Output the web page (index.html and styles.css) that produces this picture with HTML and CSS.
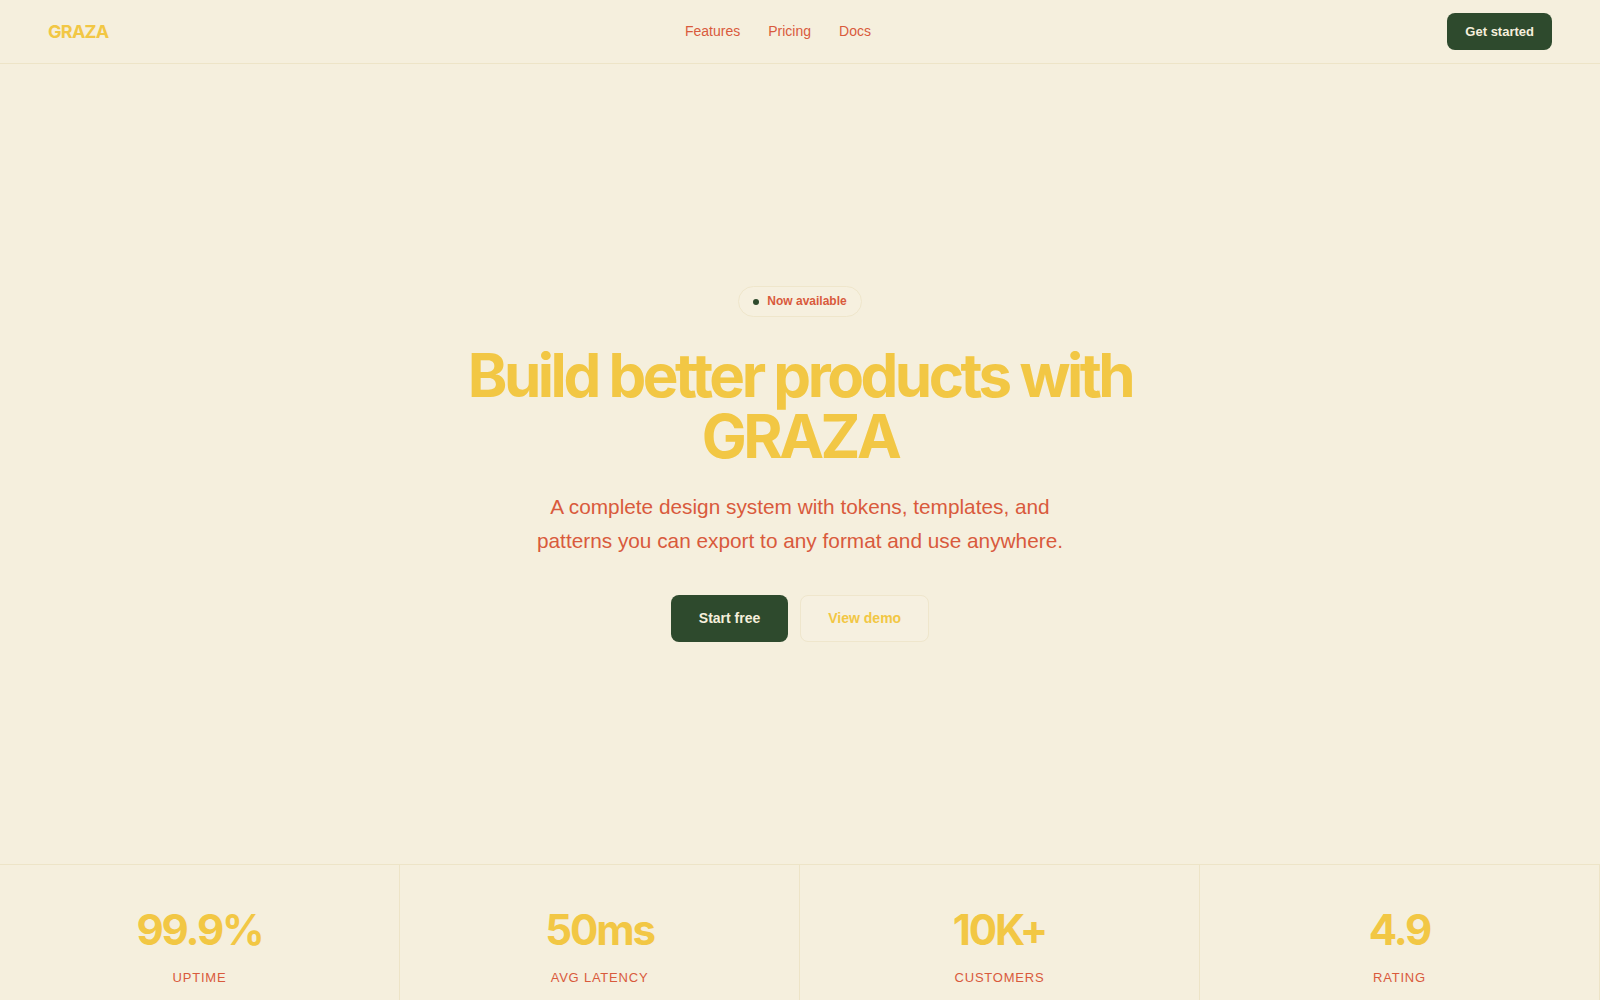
FILE: index.html
```html
<!DOCTYPE html>
<html lang="en">
<head>
<meta charset="utf-8">
<title>GRAZA</title>
<link rel="stylesheet" href="styles.css">
</head>
<body>
  <header class="nav">
    <a class="logo" href="#">GRAZA</a>
    <nav class="nav-links">
      <a href="#">Features</a>
      <a href="#">Pricing</a>
      <a href="#">Docs</a>
    </nav>
    <a class="btn btn-nav" href="#">Get started</a>
  </header>

  <main>
    <section class="hero">
      <div class="badge"><span class="dot"></span>Now available</div>
      <h1 class="title">Build better products with<br>GRAZA</h1>
      <p class="subtitle">A complete design system with tokens, templates, and patterns you can export to any format and use anywhere.</p>
      <div class="actions">
        <a class="btn btn-primary" href="#">Start free</a>
        <a class="btn btn-ghost" href="#">View demo</a>
      </div>
    </section>

    <section class="stats">
      <div class="stat"><div class="stat-num">99.9%</div><div class="stat-label">UPTIME</div></div>
      <div class="stat"><div class="stat-num">50ms</div><div class="stat-label">AVG LATENCY</div></div>
      <div class="stat"><div class="stat-num">10K+</div><div class="stat-label">CUSTOMERS</div></div>
      <div class="stat"><div class="stat-num">4.9</div><div class="stat-label">RATING</div></div>
    </section>
  </main>
</body>
</html>
```

FILE: styles.css
```css
* { box-sizing: border-box; }

html, body {
  margin: 0;
  padding: 0;
}

body {
  background: #f5efdd;
  font-family: "Liberation Sans", Arial, sans-serif;
  color: #d95a3c;
}

a { text-decoration: none; }

.nav {
  display: flex;
  align-items: center;
  justify-content: space-between;
  padding: 13px 48px;
  border-bottom: 1px solid #ede4c7;
}

.logo {
  font-family: Inter, "Liberation Sans", sans-serif;
  font-weight: 700;
  font-size: 18px;
  letter-spacing: -0.04em;
  color: #f2c744;
  line-height: 22px;
}

.nav-links {
  display: flex;
  gap: 28px;
}

.nav-links a {
  font-size: 14px;
  color: #d95a3c;
  line-height: 17px;
}

.btn {
  display: inline-block;
  font-weight: 700;
  border-radius: 8px;
}

.btn-nav {
  background: #2e4a2d;
  color: #f5efdc;
  font-size: 13px;
  line-height: 15px;
  padding: 11px 18px;
}

.hero {
  min-height: 800px;
  display: flex;
  flex-direction: column;
  align-items: center;
  justify-content: center;
  text-align: center;
}

.badge {
  display: inline-flex;
  align-items: center;
  gap: 8px;
  padding: 7px 14px;
  border: 1px solid #efe6cb;
  border-radius: 999px;
  background: #f6f0df;
  font-size: 12px;
  line-height: 15px;
  font-weight: 700;
  color: #d95a3c;
}

.dot {
  width: 6px;
  height: 6px;
  border-radius: 50%;
  background: #2e4a2d;
}

.title {
  margin: 28px 0 0;
  font-family: Inter, "Liberation Sans", sans-serif;
  font-weight: 700;
  font-size: 60px;
  line-height: 61px;
  letter-spacing: -0.058em;
  color: #f2c744;
}

.subtitle {
  margin: 23px 0 0;
  max-width: 560px;
  font-size: 20.8px;
  line-height: 33.3px;
  color: #d95a3c;
}

.actions {
  display: flex;
  gap: 12px;
  margin-top: 38px;
}

.btn-primary {
  background: #2e4a2d;
  color: #f5efdc;
  font-size: 14px;
  line-height: 17px;
  padding: 15px 28px;
}

.btn-ghost {
  background: #f6f0e0;
  color: #f2c744;
  font-size: 14px;
  line-height: 17px;
  padding: 14px 27px;
  border: 1px solid #efe6cc;
}

.stats {
  display: grid;
  grid-template-columns: repeat(4, 1fr);
  border-top: 1px solid #ede4c7;
}

.stat {
  padding: 40px 24px 48px;
  text-align: center;
  border-right: 1px solid #ede4c7;
}

.stat-num {
  font-family: Inter, "Liberation Sans", sans-serif;
  font-weight: 700;
  font-size: 42px;
  line-height: 1.2;
  letter-spacing: -0.05em;
  color: #f2c744;
}

.stat-label {
  margin-top: 15px;
  font-size: 13px;
  letter-spacing: 0.06em;
  color: #d95a3c;
}
```
